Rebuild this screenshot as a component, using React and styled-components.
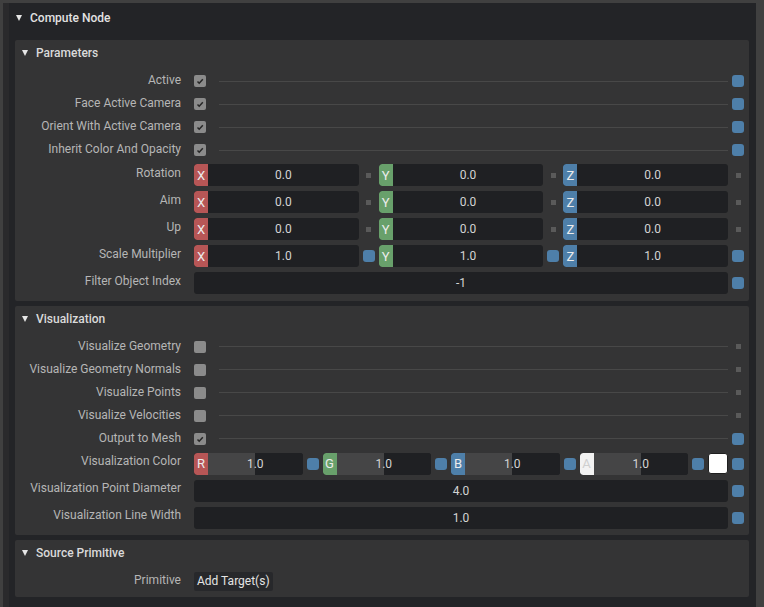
import styled, { createGlobalStyle } from 'styled-components';

const GlobalStyle = createGlobalStyle`
  html, body {
    margin: 0;
    padding: 0;
    background: #404040;
    font-family: Roboto, "Liberation Sans", sans-serif;
    font-size: 12px;
  }
  * { box-sizing: border-box; }
`;

const BLUE = '#4e7fa9';
const BADGE = {
  X: '#b75656', Y: '#68a06b', Z: '#4e7fa9',
  R: '#b75656', G: '#68a06b', B: '#4e7fa9', A: '#f2f2f2',
};

const Window = styled.div`
  height: 100vh;
  padding: 3px 8px 0 3px;
  overflow: hidden;
`;

const ComputeFrame = styled.div`
  height: 100%;
  background: #232427;
  border-left: 6px solid #2a2a2c;
`;

const ComputeHeader = styled.div`
  height: 29px;
  display: flex;
  align-items: center;
  gap: 8px;
  padding-left: 7px;
  color: #e2e2e2;
  font-weight: 500;
  font-size: 12px;
`;

const ComputeBody = styled.div`
  padding: 8px 7px 0 6px;
  display: flex;
  flex-direction: column;
  gap: 5px;
`;

const Frame = styled.div`
  background: #343435;
  border-radius: 2px;
  padding-bottom: 4px;
`;

const FrameHeader = styled.div`
  height: 26px;
  display: flex;
  align-items: center;
  gap: 8px;
  padding-left: 7px;
  color: #dadada;
  font-weight: 500;
  margin-bottom: 3.5px;
`;

const Arrow = styled.span`
  width: 0;
  height: 0;
  border-left: 3px solid transparent;
  border-right: 3px solid transparent;
  border-top: 6px solid #e6e6e6;
`;

const Row = styled.div`
  display: flex;
  align-items: center;
  height: ${p => (p.$tall ? 27 : 23)}px;
  padding-right: 5px;
`;

const Label = styled.div`
  width: 166px;
  text-align: right;
  color: #b6b6b6;
  white-space: nowrap;
  margin-right: 13px;
  padding-bottom: ${p => (p.$tall ? 5 : 2)}px;
`;

const Widgets = styled.div`
  flex: 1;
  display: flex;
  align-items: center;
  gap: 4px;
  min-width: 0;
`;

const CheckBox = styled.div`
  width: 12px;
  height: 12px;
  border-radius: 2px;
  background: #8b8b8b;
  display: flex;
  align-items: center;
  justify-content: center;
  flex: none;
`;

const Line = styled.div`
  flex: 1;
  height: 1px;
  margin-left: 9px;
  background: #484848;
`;

const Slot = styled.div`
  width: 12px;
  height: 12px;
  flex: none;
  display: flex;
  align-items: center;
  justify-content: center;
  &::after {
    content: '';
    width: ${p => (p.$on ? 12 : 5)}px;
    height: ${p => (p.$on ? 12 : 5)}px;
    border-radius: ${p => (p.$on ? 3 : 0)}px;
    background: ${p => (p.$on ? BLUE : '#5a5a5a')};
  }
`;

const Field = styled.div`
  flex: 1;
  min-width: 0;
  height: 22px;
  display: flex;
  border-radius: 3px;
  overflow: hidden;
  background: #1f2023;
`;

const Badge = styled.div`
  width: 14px;
  flex: none;
  background: ${p => BADGE[p.$axis]};
  color: ${p => (p.$axis === 'A' ? '#cfcfcf' : '#ececec')};
  font-size: 13px;
  display: flex;
  align-items: center;
  justify-content: center;
  border-radius: 3px 0 0 3px;
`;

const Value = styled.div`
  flex: 1;
  display: flex;
  align-items: center;
  justify-content: center;
  color: #d4d4d4;
  background: ${p => (p.$slider ? 'linear-gradient(to right, #454546 50%, #1f2023 50%)' : 'transparent')};
`;

const Swatch = styled.div`
  width: 20px;
  height: 21px;
  border-radius: 3px;
  background: #ffffff;
  border: 1px solid #1f1f1f;
  flex: none;
`;

const Button = styled.div`
  height: 19px;
  padding: 0 3px;
  display: flex;
  align-items: center;
  background: #27282b;
  color: #e4e4e4;
  border-radius: 2px;
`;

function Check() {
  return (
    <svg width="8" height="8" viewBox="0 0 8 8">
      <polyline points="1.5,4.5 3.2,6.2 6.8,2.2" fill="none" stroke="#262626" strokeWidth="1.5" />
    </svg>
  );
}

function BoolRow({ label, checked, changed }) {
  return (
    <Row>
      <Label>{label}</Label>
      <Widgets>
        <CheckBox>{checked && <Check />}</CheckBox>
        <Line />
        <Slot $on={changed} />
      </Widgets>
    </Row>
  );
}

function VecRow({ label, values, changed }) {
  const axes = ['X', 'Y', 'Z'];
  return (
    <Row $tall>
      <Label $tall>{label}</Label>
      <Widgets>
        {axes.map((a, i) => (
          <>
            <Field key={a}>
              <Badge $axis={a}>{a}</Badge>
              <Value>{values[i]}</Value>
            </Field>
            <Slot key={a + 's'} $on={changed} />
          </>
        ))}
      </Widgets>
    </Row>
  );
}

function NumRow({ label, value }) {
  return (
    <Row $tall>
      <Label $tall>{label}</Label>
      <Widgets>
        <Field>
          <Value>{value}</Value>
        </Field>
        <Slot $on />
      </Widgets>
    </Row>
  );
}

function ColorRow({ label }) {
  return (
    <Row $tall>
      <Label $tall>{label}</Label>
      <Widgets>
        {['R', 'G', 'B', 'A'].map(a => (
          <>
            <Field key={a}>
              <Badge $axis={a}>{a}</Badge>
              <Value $slider>1.0</Value>
            </Field>
            <Slot key={a + 's'} $on />
          </>
        ))}
        <Swatch />
        <Slot $on />
      </Widgets>
    </Row>
  );
}

export default function App() {
  return (
    <Window>
      <GlobalStyle />
      <ComputeFrame>
        <ComputeHeader>
          <Arrow />
          Compute Node
        </ComputeHeader>
        <ComputeBody>
          <Frame>
            <FrameHeader><Arrow />Parameters</FrameHeader>
            <BoolRow label="Active" checked changed />
            <BoolRow label="Face Active Camera" checked changed />
            <BoolRow label="Orient With Active Camera" checked changed />
            <BoolRow label="Inherit Color And Opacity" checked changed />
            <VecRow label="Rotation" values={['0.0', '0.0', '0.0']} />
            <VecRow label="Aim" values={['0.0', '0.0', '0.0']} />
            <VecRow label="Up" values={['0.0', '0.0', '0.0']} />
            <VecRow label="Scale Multiplier" values={['1.0', '1.0', '1.0']} changed />
            <NumRow label="Filter Object Index" value="-1" />
          </Frame>
          <Frame>
            <FrameHeader><Arrow />Visualization</FrameHeader>
            <BoolRow label="Visualize Geometry" />
            <BoolRow label="Visualize Geometry Normals" />
            <BoolRow label="Visualize Points" />
            <BoolRow label="Visualize Velocities" />
            <BoolRow label="Output to Mesh" checked changed />
            <ColorRow label="Visualization Color" />
            <NumRow label="Visualization Point Diameter" value="4.0" />
            <NumRow label="Visualization Line Width" value="1.0" />
          </Frame>
          <Frame>
            <FrameHeader><Arrow />Source Primitive</FrameHeader>
            <Row>
              <Label>Primitive</Label>
              <Button>Add Target(s)</Button>
            </Row>
          </Frame>
        </ComputeBody>
      </ComputeFrame>
    </Window>
  );
}
